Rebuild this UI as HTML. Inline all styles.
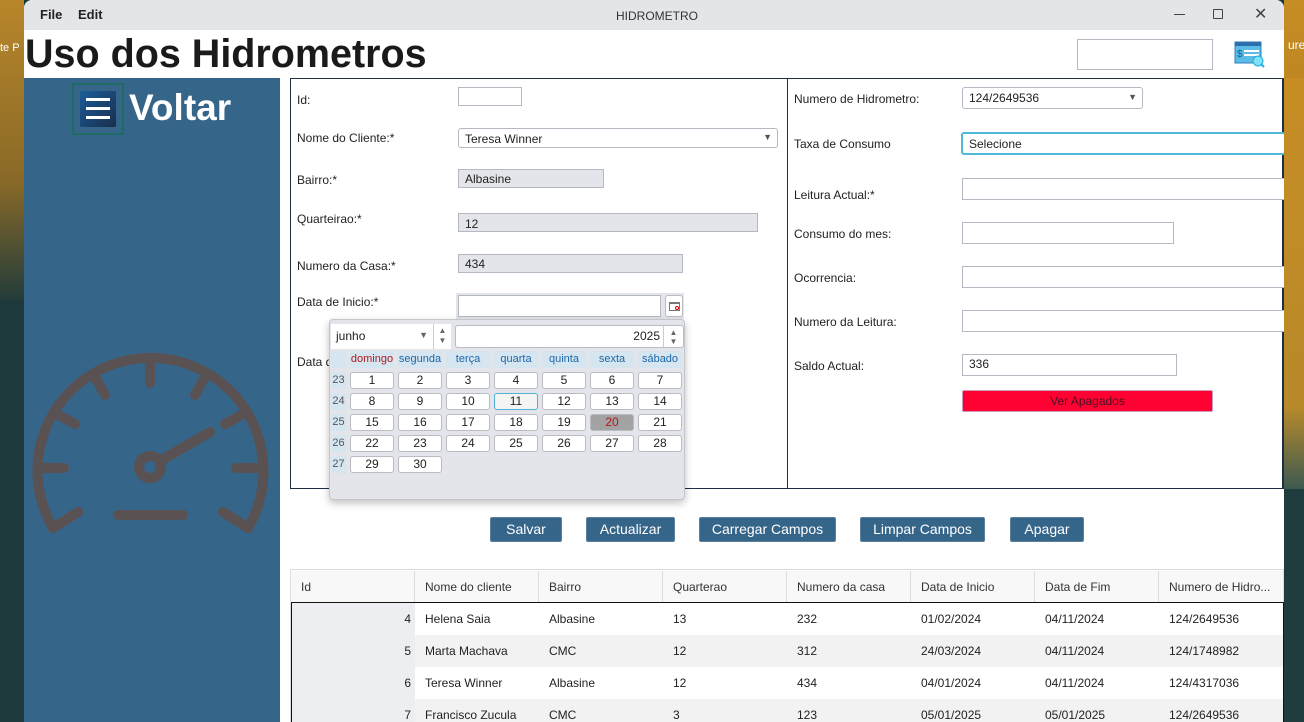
<!DOCTYPE html>
<html><head><meta charset="utf-8"><style>
*{box-sizing:border-box;margin:0;padding:0}
html{width:1304px;height:722px;overflow:hidden}
body{width:1304px;height:722px;position:relative;overflow:hidden;font-family:"Liberation Sans",sans-serif;font-size:12px;color:#222;background:#1c3a3c}
.a{position:absolute}
.lbl{position:absolute;font-size:12px;color:#222}
.inp{position:absolute;border:1px solid #b3b8c3;background:#fff;height:21px;padding:2px 6px;font-size:12px}
.dis{background:#e4e5ea}
.btn{position:absolute;top:517px;height:25px;background:#36658a;border:1px solid #5c7f9c;color:#fff;font-size:14px;text-align:center;line-height:23px;border-radius:2px}
.dc{position:absolute;width:44px;height:17px;border:1px solid #b9bcc4;border-radius:3px;background:#fff;text-align:center;font-size:12px;line-height:15px}
.dh{position:absolute;width:44px;height:17px;background:#d6e6f1;color:#1d66a8;text-align:center;font-size:11px;line-height:17px;border-radius:2px}
.wk{position:absolute;left:331px;width:15px;height:17px;background:#d6e6f1;color:#555;font-size:11px;line-height:17px;text-align:center}
.th{position:absolute;top:571px;height:32px;line-height:32px;padding-left:10px;border-right:1px solid #ddd;font-size:12px;color:#333;width:124px;background:#f8f8f8}
.td{position:absolute;height:32px;line-height:32px;padding-left:10px;font-size:12px;color:#222;width:124px}
</style></head><body>
<div class="a" style="left:0;top:0;width:24px;height:300px;background:linear-gradient(#b8862a,#8a6a28 60%,#233c3a)"></div>
<div class="a" style="left:0;top:300px;width:24px;height:422px;background:#1f3a3c"></div>
<div class="a" style="left:1284px;top:0;width:20px;height:722px;background:linear-gradient(#c78d24,#a8781e 40%,#2c4a48 70%,#1c3a3c)"></div>
<div class="a" style="left:0;top:42px;font-size:11px;color:#fff">te P</div>
<div class="a" style="left:1288px;top:38px;font-size:12px;color:#fff">ure</div>
<div class="a" style="left:24px;top:0;width:1260px;height:722px;background:#fff;border-radius:8px 8px 0 0;overflow:hidden">
 <div class="a" style="left:0;top:0;width:1260px;height:30px;background:#e4e5e9"></div>
 <div class="a" style="left:16px;top:7px;font-weight:bold;font-size:13px">File</div>
 <div class="a" style="left:54px;top:7px;font-weight:bold;font-size:13px">Edit</div>
 <div class="a" style="left:592px;top:9px;font-size:12px;color:#333">HIDROMETRO</div>
 <div class="a" style="left:1150px;top:14px;width:11px;height:1px;background:#444"></div>
 <div class="a" style="left:1189px;top:9px;width:10px;height:10px;border:1px solid #444;border-radius:1px"></div>
 <div class="a" style="left:1230px;top:4px;font-size:16px;color:#444">✕</div>
 <div class="a" style="left:1px;top:31px;font-size:39.5px;font-weight:bold;color:#1a1a1a;line-height:46px">Uso dos Hidrometros</div>
 <div class="a" style="left:1053px;top:39px;width:136px;height:31px;border:1px solid #b3b8c3"></div>
 <svg class="a" style="left:1210px;top:40px" width="32" height="30" viewBox="0 0 32 30"><rect x="1" y="2" width="26" height="21" fill="#5bbde6" stroke="#2e7fbf"/><rect x="1" y="2" width="26" height="4" fill="#2e6fb0"/><text x="3" y="17" font-size="10" fill="#1a5c94" font-family="Liberation Sans">$</text><rect x="10" y="10" width="15" height="2" fill="#fff"/><rect x="10" y="14" width="15" height="2" fill="#fff"/><circle cx="24" cy="21" r="5" fill="#7fe0f7" stroke="#1eaee0"/><line x1="27" y1="24" x2="30" y2="27" stroke="#1eaee0" stroke-width="2"/></svg>
 <div class="a" style="left:0;top:78px;width:256px;height:644px;background:#36658a"></div>
 <div class="a" style="left:48px;top:83px;width:52px;height:52px;border:2px solid #1f6b64"></div>
 <div class="a" style="left:56px;top:91px;width:36px;height:36px;background:linear-gradient(135deg,#1b5c98,#1a2f4d);border-radius:2px"></div>
 <div class="a" style="left:62px;top:98px;width:24px;height:3px;background:#fff"></div>
 <div class="a" style="left:62px;top:107px;width:24px;height:3px;background:#fff"></div>
 <div class="a" style="left:62px;top:116px;width:24px;height:3px;background:#fff"></div>
 <div class="a" style="left:105px;top:87px;font-size:37px;font-weight:bold;color:#fff">Voltar</div>
 <svg class="a" style="left:0;top:340px" width="256" height="220" viewBox="0 340 256 220">
  <g stroke="#5a5153" stroke-width="10" fill="none" stroke-linecap="round">
   <path d="M29,528 A113,113 0 1 1 224,528"/>
   <path d="M29,528 L54,512 M224,528 L199,512"/>
   <line x1="126" y1="360" x2="126" y2="383"/>
   <line x1="71" y1="377" x2="81" y2="395"/>
   <line x1="181" y1="377" x2="171" y2="395"/>
   <line x1="31" y1="413" x2="51" y2="424"/>
   <line x1="221" y1="413" x2="201" y2="424"/>
   <line x1="15" y1="468" x2="40" y2="468"/>
   <line x1="212" y1="468" x2="237" y2="468"/>
   <line x1="94" y1="515" x2="159" y2="515"/>
   <line x1="136" y1="461" x2="186" y2="432"/>
   <circle cx="126" cy="467" r="11"/>
  </g>
 </svg>
</div>
<div class="a" style="left:290px;top:78px;width:498px;height:411px;border:1px solid #1c2f44"></div>
<div class="a" style="left:787px;top:78px;width:497px;height:411px;border:1px solid #1c2f44;border-right:2px solid #1c2f44"></div>
<div class="lbl" style="left:297px;top:93px">Id:</div>
<div class="inp" style="left:458px;top:87px;width:64px;height:19px"></div>
<div class="lbl" style="left:297px;top:131px">Nome do Cliente:*</div>
<div class="inp" style="left:458px;top:128px;width:320px;height:20px;border-radius:3px;padding-top:3px">Teresa Winner<span style="position:absolute;right:5px;top:3px;font-size:9px;color:#555">▼</span></div>
<div class="lbl" style="left:297px;top:173px">Bairro:*</div>
<div class="inp dis" style="left:458px;top:169px;width:146px;height:19px">Albasine</div>
<div class="lbl" style="left:297px;top:212px">Quarteirao:*</div>
<div class="inp dis" style="left:458px;top:213px;width:300px;height:19px;padding-top:3px">12</div>
<div class="lbl" style="left:297px;top:259px">Numero da Casa:*</div>
<div class="inp dis" style="left:458px;top:254px;width:225px;height:19px">434</div>
<div class="lbl" style="left:297px;top:295px">Data de Inicio:*</div>
<div class="a" style="left:456px;top:293px;width:228px;height:26px;background:#e4e5ea"></div>
<div class="inp" style="left:458px;top:295px;width:203px;height:22px"></div>
<div class="a" style="left:665px;top:295px;width:18px;height:22px;border:1px solid #b9bcc4;background:#fff;border-radius:3px"><div style="position:absolute;left:3px;top:6px;width:11px;height:9px;border:1px solid #777;border-top:2px solid #777"></div><div style="position:absolute;left:9px;top:10px;width:4px;height:4px;border:1px solid #d00;border-radius:50%"></div></div>
<div class="lbl" style="left:297px;top:355px">Data d</div>
<div class="lbl" style="left:794px;top:92px">Numero de Hidrometro:</div>
<div class="inp" style="left:962px;top:87px;width:181px;height:22px;border-radius:3px;padding-top:3px">124/2649536<span style="position:absolute;right:5px;top:4px;font-size:9px;color:#555">▼</span></div>
<div class="lbl" style="left:794px;top:137px">Taxa de Consumo</div>
<div class="inp" style="left:961px;top:132px;width:325px;height:23px;border:2px solid #4fb9da;border-radius:3px;padding-top:3px">Selecione</div>
<div class="lbl" style="left:794px;top:188px">Leitura Actual:*</div>
<div class="inp" style="left:962px;top:178px;width:325px;height:22px"></div>
<div class="lbl" style="left:794px;top:227px">Consumo do mes:</div>
<div class="inp" style="left:962px;top:222px;width:212px;height:22px"></div>
<div class="lbl" style="left:794px;top:271px">Ocorrencia:</div>
<div class="inp" style="left:962px;top:266px;width:325px;height:22px"></div>
<div class="lbl" style="left:794px;top:315px">Numero da Leitura:</div>
<div class="inp" style="left:962px;top:310px;width:325px;height:22px"></div>
<div class="lbl" style="left:794px;top:359px">Saldo Actual:</div>
<div class="inp" style="left:962px;top:354px;width:215px;height:22px">336</div>
<div class="a" style="left:962px;top:390px;width:251px;height:22px;background:#ff0033;border:1px solid #c9b;border-radius:2px;text-align:center;line-height:20px;color:#4a1020">Ver Apagados</div>
<div class="a" style="left:1284px;top:78px;width:20px;height:411px;background:linear-gradient(#c78d24,#b88a2a 80%,#3d5a50)"></div>
<div class="a" style="left:329px;top:319px;width:356px;height:181px;background:#e4e5ea;border:1px solid #c3c6cc;border-radius:4px;box-shadow:0 3px 8px rgba(0,0,0,.25)"></div>
<div class="a" style="left:331px;top:324px;width:102px;height:25px;background:#fff;padding:5px 5px;font-size:12px">junho<span style="position:absolute;right:5px;top:6px;font-size:9px;color:#666">▼</span></div>
<div class="a" style="left:433px;top:324px;width:18px;height:25px;background:#fff;border-left:1px solid #ccc;font-size:8px;color:#666;text-align:center;line-height:10px;padding-top:2px">▲<br>▼</div>
<div class="a" style="left:455px;top:325px;width:229px;height:23px;background:#fff;border:1px solid #b9bcc4;border-radius:3px"></div>
<div class="a" style="left:600px;top:329px;width:60px;text-align:right;font-size:12px">2025</div>
<div class="a" style="left:663px;top:326px;width:20px;height:21px;border-left:1px solid #ccc;font-size:8px;color:#666;text-align:center;line-height:9px;padding-top:2px">▲<br>▼</div>
<div class="wk" style="top:351px"></div>
<div class="dh" style="left:350px;top:351px;color:#b0181e">domingo</div>
<div class="dh" style="left:398px;top:351px">segunda</div>
<div class="dh" style="left:446px;top:351px">terça</div>
<div class="dh" style="left:494px;top:351px">quarta</div>
<div class="dh" style="left:542px;top:351px">quinta</div>
<div class="dh" style="left:590px;top:351px">sexta</div>
<div class="dh" style="left:638px;top:351px">sábado</div>
<div class="wk" style="top:372px">23</div><div class="wk" style="top:393px">24</div><div class="wk" style="top:414px">25</div><div class="wk" style="top:435px">26</div><div class="wk" style="top:456px">27</div>
<div class="dc" style="left:350px;top:372px">1</div><div class="dc" style="left:398px;top:372px">2</div><div class="dc" style="left:446px;top:372px">3</div><div class="dc" style="left:494px;top:372px">4</div><div class="dc" style="left:542px;top:372px">5</div><div class="dc" style="left:590px;top:372px">6</div><div class="dc" style="left:638px;top:372px">7</div>
<div class="dc" style="left:350px;top:393px">8</div><div class="dc" style="left:398px;top:393px">9</div><div class="dc" style="left:446px;top:393px">10</div><div class="dc" style="left:494px;top:393px;border-color:#4fb2d6;background:#f4f4f4">11</div><div class="dc" style="left:542px;top:393px">12</div><div class="dc" style="left:590px;top:393px">13</div><div class="dc" style="left:638px;top:393px">14</div>
<div class="dc" style="left:350px;top:414px">15</div><div class="dc" style="left:398px;top:414px">16</div><div class="dc" style="left:446px;top:414px">17</div><div class="dc" style="left:494px;top:414px">18</div><div class="dc" style="left:542px;top:414px">19</div><div class="dc" style="left:590px;top:414px;background:#a3a3a3;color:#b0181e">20</div><div class="dc" style="left:638px;top:414px">21</div>
<div class="dc" style="left:350px;top:435px">22</div><div class="dc" style="left:398px;top:435px">23</div><div class="dc" style="left:446px;top:435px">24</div><div class="dc" style="left:494px;top:435px">25</div><div class="dc" style="left:542px;top:435px">26</div><div class="dc" style="left:590px;top:435px">27</div><div class="dc" style="left:638px;top:435px">28</div>
<div class="dc" style="left:350px;top:456px">29</div><div class="dc" style="left:398px;top:456px">30</div>
<div class="btn" style="left:490px;width:72px">Salvar</div>
<div class="btn" style="left:586px;width:89px">Actualizar</div>
<div class="btn" style="left:699px;width:137px">Carregar Campos</div>
<div class="btn" style="left:860px;width:125px">Limpar Campos</div>
<div class="btn" style="left:1010px;width:74px">Apagar</div>
<div class="a" style="left:290px;top:569px;width:994px;height:153px;border:1px solid #ddd"></div>
<div class="th" style="left:291px">Id</div><div class="th" style="left:415px">Nome do cliente</div><div class="th" style="left:539px">Bairro</div><div class="th" style="left:663px">Quarterao</div><div class="th" style="left:787px">Numero da casa</div><div class="th" style="left:911px">Data de Inicio</div><div class="th" style="left:1035px">Data de Fim</div><div class="th" style="left:1159px;border-right:none">Numero de Hidro...</div>
<div class="a" style="left:291px;top:602px;width:993px;height:120px;border:1px solid #111;border-bottom:none;background:#fff"></div>
<div class="a" style="left:292px;top:603px;width:123px;height:119px;background:#edeef2"></div>
<div class="a" style="left:415px;top:635px;width:868px;height:32px;background:#f2f2f2"></div>
<div class="a" style="left:415px;top:699px;width:868px;height:23px;background:#f2f2f2"></div>
<div class="td" style="left:291px;top:603px;text-align:right;padding-right:4px;padding-left:0">4</div>
<div class="td" style="left:291px;top:635px;text-align:right;padding-right:4px;padding-left:0">5</div>
<div class="td" style="left:291px;top:667px;text-align:right;padding-right:4px;padding-left:0">6</div>
<div class="td" style="left:291px;top:699px;height:23px;overflow:hidden;text-align:right;padding-right:4px;padding-left:0">7</div>
<div class="td" style="left:415px;top:603px">Helena Saia</div><div class="td" style="left:539px;top:603px">Albasine</div><div class="td" style="left:663px;top:603px">13</div><div class="td" style="left:787px;top:603px">232</div><div class="td" style="left:911px;top:603px">01/02/2024</div><div class="td" style="left:1035px;top:603px">04/11/2024</div><div class="td" style="left:1159px;top:603px">124/2649536</div>
<div class="td" style="left:415px;top:635px">Marta Machava</div><div class="td" style="left:539px;top:635px">CMC</div><div class="td" style="left:663px;top:635px">12</div><div class="td" style="left:787px;top:635px">312</div><div class="td" style="left:911px;top:635px">24/03/2024</div><div class="td" style="left:1035px;top:635px">04/11/2024</div><div class="td" style="left:1159px;top:635px">124/1748982</div>
<div class="td" style="left:415px;top:667px">Teresa Winner</div><div class="td" style="left:539px;top:667px">Albasine</div><div class="td" style="left:663px;top:667px">12</div><div class="td" style="left:787px;top:667px">434</div><div class="td" style="left:911px;top:667px">04/01/2024</div><div class="td" style="left:1035px;top:667px">04/11/2024</div><div class="td" style="left:1159px;top:667px">124/4317036</div>
<div class="a" style="left:415px;top:699px;width:868px;height:23px;overflow:hidden">
<div class="td" style="left:0;top:0">Francisco Zucula</div><div class="td" style="left:124px;top:0">CMC</div><div class="td" style="left:248px;top:0">3</div><div class="td" style="left:372px;top:0">123</div><div class="td" style="left:496px;top:0">05/01/2025</div><div class="td" style="left:620px;top:0">05/01/2025</div><div class="td" style="left:744px;top:0">124/2649536</div>
</div>
<div class="a" style="left:1284px;top:489px;width:20px;height:233px;background:#1f3d3e"></div>
</body></html>
